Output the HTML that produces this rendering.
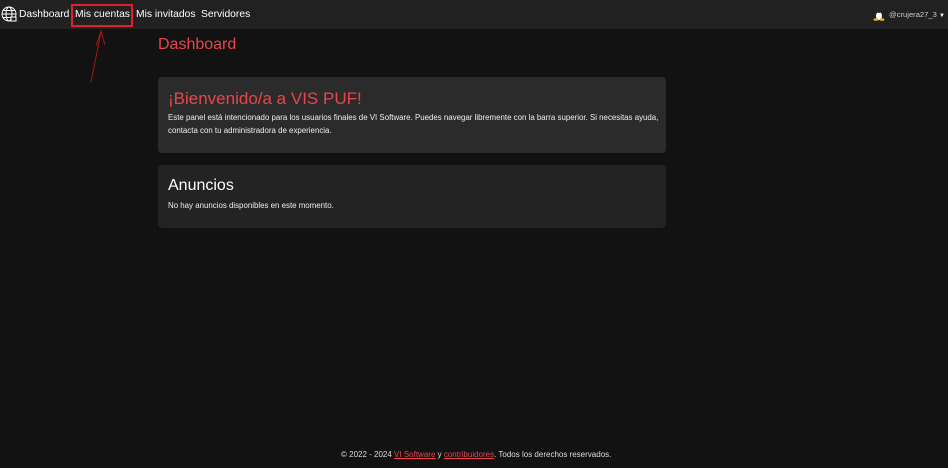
<!DOCTYPE html>
<html><head><style>
body{margin:0;width:948px;height:468px;background:#121212;font-family:"Liberation Sans",sans-serif;color:#fff;position:relative;overflow:hidden}
.nav{position:absolute;left:0;top:0;width:948px;height:29px;background:#212121;}
.nav span{position:absolute;top:9px;font-size:10.3px;color:#fff;white-space:nowrap}
.box{position:absolute;left:71px;top:4px;width:58px;height:19px;border:2px solid #e0202a}
h1{position:absolute;left:158px;top:36px;margin:0;font-size:16px;font-weight:normal;color:#e8464a}
.card{position:absolute;left:158px;width:508px;border-radius:4px}
.card h2{margin:0;position:absolute;left:10px;font-weight:normal}
.card p{margin:0;position:absolute;left:10px;font-size:7.9px;line-height:12.5px;color:#eee;white-space:nowrap}
.foot{position:absolute;top:450px;left:341px;font-size:8px;color:#ddd;white-space:nowrap}
.foot a{color:#e8464a;text-decoration:underline}
</style></head><body>
<div class="nav">
<svg style="position:absolute;left:1px;top:6px" width="17" height="17" viewBox="0 0 17 17" fill="none" stroke="#fff" stroke-width="1"><circle cx="8" cy="8" r="7"/><ellipse cx="8" cy="8" rx="3" ry="7"/><line x1="1" y1="8" x2="15" y2="8"/><line x1="2" y1="4.5" x2="14" y2="4.5"/><line x1="2" y1="11.5" x2="14" y2="11.5"/><rect x="10" y="11" width="5" height="4" fill="#212121"/></svg>
<span style="left:19px">Dashboard</span>
<span style="left:75px">Mis cuentas</span>
<span style="left:136px">Mis invitados</span>
<span style="left:201px">Servidores</span>
<div class="box"></div>
<svg style="position:absolute;left:873px;top:6px" width="12" height="15" viewBox="0 0 12 15"><ellipse cx="6" cy="9" rx="5" ry="5" fill="#222"/><ellipse cx="6" cy="10" rx="3" ry="4" fill="#fff"/><ellipse cx="6" cy="4" rx="2.5" ry="3" fill="#222"/><ellipse cx="3" cy="13.5" rx="2.5" ry="1.3" fill="#f0b020"/><ellipse cx="9" cy="13.5" rx="2.5" ry="1.3" fill="#f0b020"/></svg>
<span style="left:889px;font-size:7.6px;top:10px;color:#ccc">@crujera27_3 <span style="position:static;font-size:6px">▼</span></span>
</div>
<svg style="position:absolute;left:85px;top:28px" width="30" height="56"><path d="M6 54 L16 4 M11 18 L16 3 L20 17" stroke="#a01818" fill="none" stroke-width="1"/></svg>
<h1>Dashboard</h1>
<div class="card" style="top:77px;height:76px;background:#2b2b2b">
<h2 style="top:12px;font-size:17px;color:#e8464a">¡Bienvenido/a a VIS PUF!</h2>
<p style="top:35px">Este panel está intencionado para los usuarios finales de VI Software. Puedes navegar libremente con la barra superior. Si necesitas ayuda,<br>contacta con tu administradora de experiencia.</p>
</div>
<div class="card" style="top:165px;height:63px;background:#232323">
<h2 style="top:12px;font-size:16px">Anuncios</h2>
<p style="top:35px">No hay anuncios disponibles en este momento.</p>
</div>
<div class="foot">© 2022 - 2024 <a>VI Software</a> y <a>contribuidores</a>. Todos los derechos reservados.</div>
</body></html>
